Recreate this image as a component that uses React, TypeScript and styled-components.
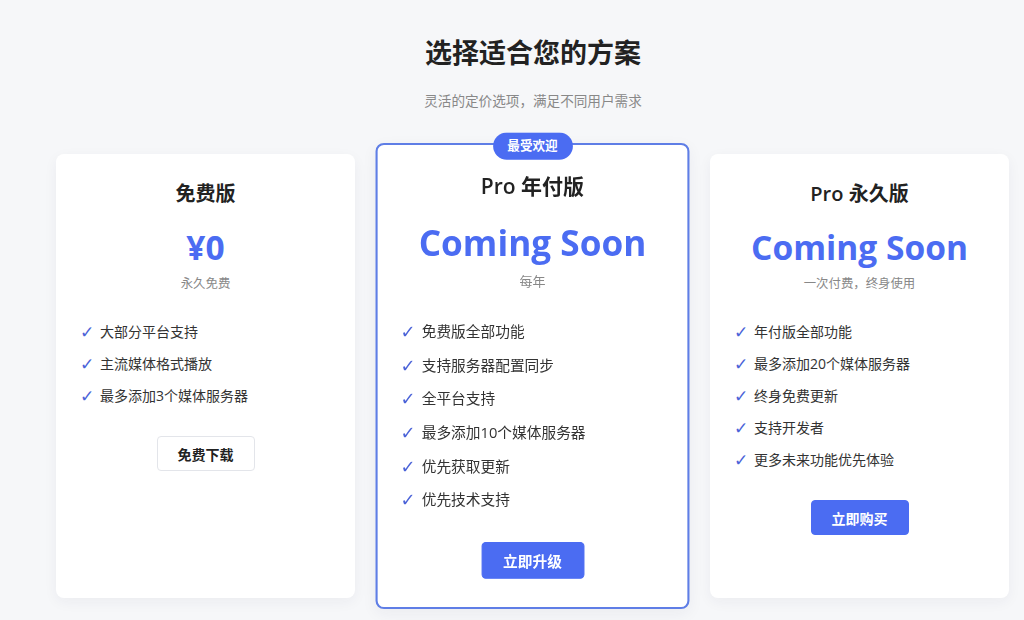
import React from "react";
import styled, { createGlobalStyle, css } from "styled-components";

const Global = createGlobalStyle`
  html, body { margin: 0; padding: 0; }
  body {
    background: #f6f7f9;
    font-family: "Open Sans", "Noto Sans CJK SC", sans-serif;
    color: #222;
  }
`;

const Page = styled.main`
  width: 954px;
  min-height: 620px;
  box-sizing: border-box;
  margin-left: 56px;
  padding: 36px 0 40px;
  display: flex;
  flex-direction: column;
  align-items: center;
`;

const Heading = styled.h1`
  margin: 0;
  font-size: 27px;
  line-height: 34px;
  font-weight: 700;
  color: #222;
`;

const Sub = styled.p`
  margin: 21px 0 0;
  font-size: 13.6px;
  line-height: 20px;
  color: #888;
`;

const Grid = styled.div`
  margin-top: 43px;
  width: 100%;
  display: grid;
  grid-template-columns: repeat(3, 299px);
  column-gap: 28px;
  align-items: stretch;
`;

const Card = styled.section<{ $featured?: boolean }>`
  position: relative;
  background: #fff;
  border-radius: 8px;
  box-shadow: 0 4px 14px rgba(30, 40, 70, 0.05);
  padding: 25px 26px 29px;
  display: flex;
  flex-direction: column;
  align-items: center;
  ${(p) =>
    p.$featured &&
    css`
      border: 2px solid #5f7ee6;
      padding: 25px 24px 27px;
      transform: scale(1.05);
      z-index: 1;
    `}
`;

const Badge = styled.div`
  position: absolute;
  top: -12px;
  left: 50%;
  transform: translateX(-50%);
  height: 26px;
  padding: 0 14px;
  border-radius: 13px;
  background: #4b6cf2;
  color: #fff;
  font-size: 12px;
  font-weight: 700;
  line-height: 26px;
  white-space: nowrap;
`;

const Title = styled.h2`
  margin: 0;
  font-size: 20px;
  line-height: 30px;
  font-weight: 600;
  color: #222;
`;

const Price = styled.div`
  margin-top: 17px;
  font-size: 33.5px;
  line-height: 43px;
  font-weight: 700;
  color: #4b6cf2;
  white-space: nowrap;
`;

const Period = styled.div`
  margin-top: 5px;
  font-size: 12.4px;
  line-height: 20px;
  color: #888;
`;

const Features = styled.ul`
  list-style: none;
  margin: 27px 0 0;
  padding: 0;
  align-self: stretch;
  display: flex;
  flex-direction: column;
  gap: 10px;
`;

const Feature = styled.li`
  display: flex;
  align-items: center;
  gap: 8px;
  font-size: 14px;
  line-height: 22px;
  color: #333;
`;

const Check = styled.span`
  font-family: "DejaVu Sans", sans-serif;
  color: #4b63d8;
  font-size: 17px;
  line-height: 22px;
  width: 10px;
  display: inline-flex;
  justify-content: center;
`;

const Button = styled.button<{ $primary?: boolean }>`
  margin-top: 29px;
  height: 35px;
  padding: 0 20px;
  border-radius: 4px;
  font-family: "Open Sans", "Noto Sans CJK SC", sans-serif;
  font-size: 14px;
  font-weight: 700;
  cursor: pointer;
  ${(p) =>
    p.$primary
      ? css`
          background: #4b6cf2;
          color: #fff;
          border: 1px solid #4b6cf2;
        `
      : css`
          background: #fff;
          color: #222;
          border: 1px solid #e3e5ea;
        `}
`;

type Plan = {
  title: string;
  price: string;
  period: string;
  features: string[];
  button: string;
  primary?: boolean;
  featured?: boolean;
};

const plans: Plan[] = [
  {
    title: "免费版",
    price: "¥0",
    period: "永久免费",
    features: ["大部分平台支持", "主流媒体格式播放", "最多添加3个媒体服务器"],
    button: "免费下载",
  },
  {
    title: "Pro 年付版",
    price: "Coming Soon",
    period: "每年",
    features: [
      "免费版全部功能",
      "支持服务器配置同步",
      "全平台支持",
      "最多添加10个媒体服务器",
      "优先获取更新",
      "优先技术支持",
    ],
    button: "立即升级",
    primary: true,
    featured: true,
  },
  {
    title: "Pro 永久版",
    price: "Coming Soon",
    period: "一次付费，终身使用",
    features: [
      "年付版全部功能",
      "最多添加20个媒体服务器",
      "终身免费更新",
      "支持开发者",
      "更多未来功能优先体验",
    ],
    button: "立即购买",
    primary: true,
  },
];

export default function App() {
  return (
    <>
      <Global />
      <Page>
        <Heading>选择适合您的方案</Heading>
        <Sub>灵活的定价选项，满足不同用户需求</Sub>
        <Grid>
          {plans.map((p) => (
            <Card key={p.title} $featured={p.featured}>
              {p.featured && <Badge>最受欢迎</Badge>}
              <Title>{p.title}</Title>
              <Price>{p.price}</Price>
              <Period>{p.period}</Period>
              <Features>
                {p.features.map((f) => (
                  <Feature key={f}>
                    <Check>✓</Check>
                    {f}
                  </Feature>
                ))}
              </Features>
              <Button $primary={p.primary}>{p.button}</Button>
            </Card>
          ))}
        </Grid>
      </Page>
    </>
  );
}
